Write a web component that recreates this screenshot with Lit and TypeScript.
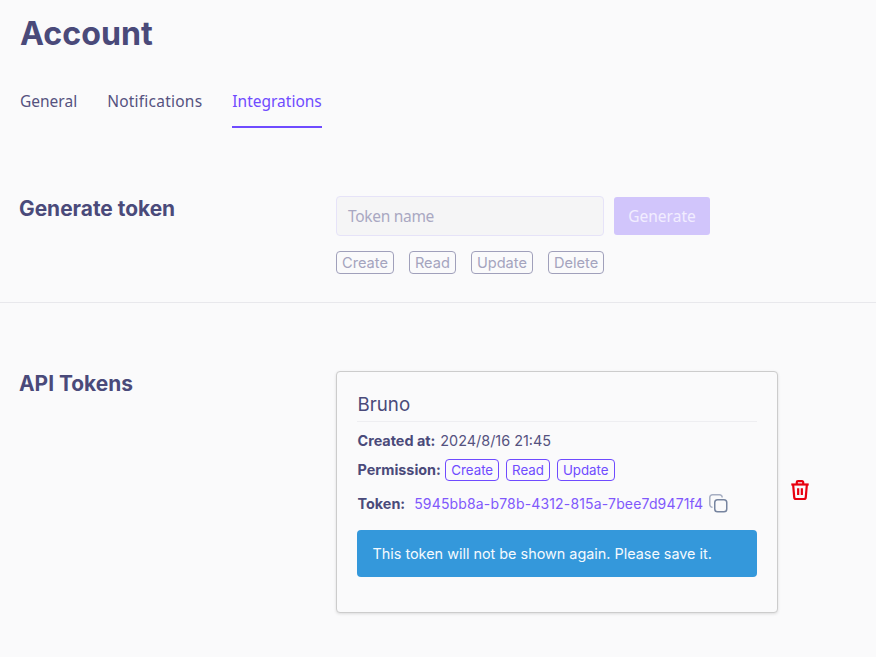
import { LitElement, html, css } from "lit";
import { customElement } from "lit/decorators.js";

@customElement("app-root")
export class AppRoot extends LitElement {
  static styles = css`
    :host { display: block; width: 876px; height: 657px; overflow: hidden; background: #fafafb; font-family: Inter, sans-serif; color: #4a4a7a; }
    h1 { margin: 0; padding: 14px 0 0 20px; font: 700 32.2px/40px Inter, sans-serif; color: #4a4a7a; height: 46px; box-sizing: content-box; }
    .tabs { display: flex; gap: 30px; padding: 28px 0 0 20px; font: 400 15.5px/20px "Noto Sans", sans-serif; color: #55527f; }
    .tab { height: 37px; padding-top: 3px; box-sizing: content-box; }
    .tab.wide { letter-spacing: .23px; }
    .tab.active { color: #6f4bff; border-bottom: 2px solid #6f4bff; height: 35px; }
    .section { display: flex; }
    .section h2 { margin: 0; width: 336px; padding: 1px 0 0 19px; box-sizing: border-box; font: 700 20.9px/24px Inter, sans-serif; color: #4a4a7a; flex: none; }
    .gen { height: 106px; padding-top: 68px; border-bottom: 1px solid #e8e8ec; box-sizing: content-box; }
    .row { display: flex; gap: 10px; }
    .input { width: 268px; height: 40px; box-sizing: border-box; border: 1px solid #e6e3f8; border-radius: 4px; background: #f5f5f6; color: #a9a8c2; padding: 0 11px; font: 400 15.5px/38px "Noto Sans", sans-serif; letter-spacing: -.3px; }
    .btn { width: 96px; height: 38px; margin-top: 1px; background: #d1c5fb; border-radius: 3px; color: #f1edff; text-align: center; font: 400 15.5px/38px "Noto Sans", sans-serif; }
    .chips { display: flex; gap: 15px; margin-top: 15px; }
    .chip { border: 1px solid #a0a0bb; border-radius: 4px; padding: 0 5px; font: 400 14.6px/23px Inter, sans-serif; color: #a4a4be; height: 23px; box-sizing: border-box; }
    .api { padding-top: 68px; }
    .card { width: 442px; height: 242px; box-sizing: border-box; border: 1px solid #ccc; border-radius: 4px; box-shadow: 0 1px 3px rgba(0,0,0,.12); background: #fafafb; padding: 22px 20px 20px; flex: none; }
    .name { font: 400 18.72px/22px Inter, sans-serif; color: #4a4a7a; padding: 0 0 5px .5px; border-bottom: 1px solid #eeeef1; }
    .line { display: flex; align-items: center; font: 400 14.4px/20px Inter, sans-serif; color: #55527f; padding-left: .5px; }
    .line b { font-weight: 700; color: #4a4a7a; }
    .l1 { margin-top: 9px; gap: 5px; }
    .l2 { margin-top: 8px; gap: 4.4px; }
    .l3 { margin-top: 13px; gap: 9px; }
    .p { border: 1px solid #6f4bff; border-radius: 4px; padding: 0 5px; font: 400 13.3px/20px Inter, sans-serif; color: #6f4bff; height: 22px; box-sizing: border-box; margin-right: 2.6px; }
    .token { color: #8058fb; letter-spacing: .16px; font-size: 14px; }
    .copy { width: 19px; height: 19px; margin-left: -3px; flex: none; align-self: flex-start; }
    .alert { margin-top: 16px; height: 47px; background: #3498db; color: #f4fafe; border-radius: 4px; padding-left: 15.500px; font: 400 14.4px/47px Inter, sans-serif; }
    .trash { width: 22px; height: 22px; margin: 108px 0 0 11px; flex: none; }
  `;

  render() {
    return html`
      <h1>Account</h1>
      <div class="tabs">
        <div class="tab">General</div>
        <div class="tab wide">Notifications</div>
        <div class="tab active">Integrations</div>
      </div>
      <div class="section gen">
        <h2>Generate token</h2>
        <div>
          <div class="row">
            <div class="input">Token name</div>
            <div class="btn">Generate</div>
          </div>
          <div class="chips">
            <span class="chip">Create</span><span class="chip">Read</span><span class="chip">Update</span><span class="chip">Delete</span>
          </div>
        </div>
      </div>
      <div class="section api">
        <h2>API Tokens</h2>
        <div class="card">
          <div class="name">Bruno</div>
          <div class="line l1"><b>Created at:</b><span>2024/8/16 21:45</span></div>
          <div class="line l2"><b>Permission:</b><span class="p">Create</span><span class="p">Read</span><span class="p">Update</span></div>
          <div class="line l3"><b>Token:</b><span class="token">5945bb8a-b78b-4312-815a-7bee7d9471f4</span><svg class="copy" viewBox="0 0 19 19" fill="none" stroke-width="1.500">
              <path d="M3.500 13.200a2.600 2.600 0 0 1-2.700-2.600V3.500a2.700 2.700 0 0 1 2.700-2.700h7a2.700 2.700 0 0 1 2.700 2.700" stroke="#a6aec2"/>
              <rect x="5.750" y="5.750" width="12" height="12" rx="2.800" stroke="#76849f"/>
            </svg>
          </div>
          <div class="alert">This token will not be shown again. Please save it.</div>
        </div>
        <svg class="trash" viewBox="0 0 24 24" fill="none" stroke="#e8000f" stroke-width="2.400" stroke-linejoin="round">
          <path d="M2.500 6h19"/>
          <path d="M8.500 6V3.500a1.200 1.200 0 0 1 1.200-1.200h4.600a1.200 1.200 0 0 1 1.200 1.200V6"/>
          <path d="M4.500 6l1.200 14a2 2 0 0 0 2 1.800h8.600a2 2 0 0 0 2-1.800L19.500 6"/>
          <path d="M10 10v7.500M14 10v7.500"/>
        </svg>
      </div>
    `;
  }
}
